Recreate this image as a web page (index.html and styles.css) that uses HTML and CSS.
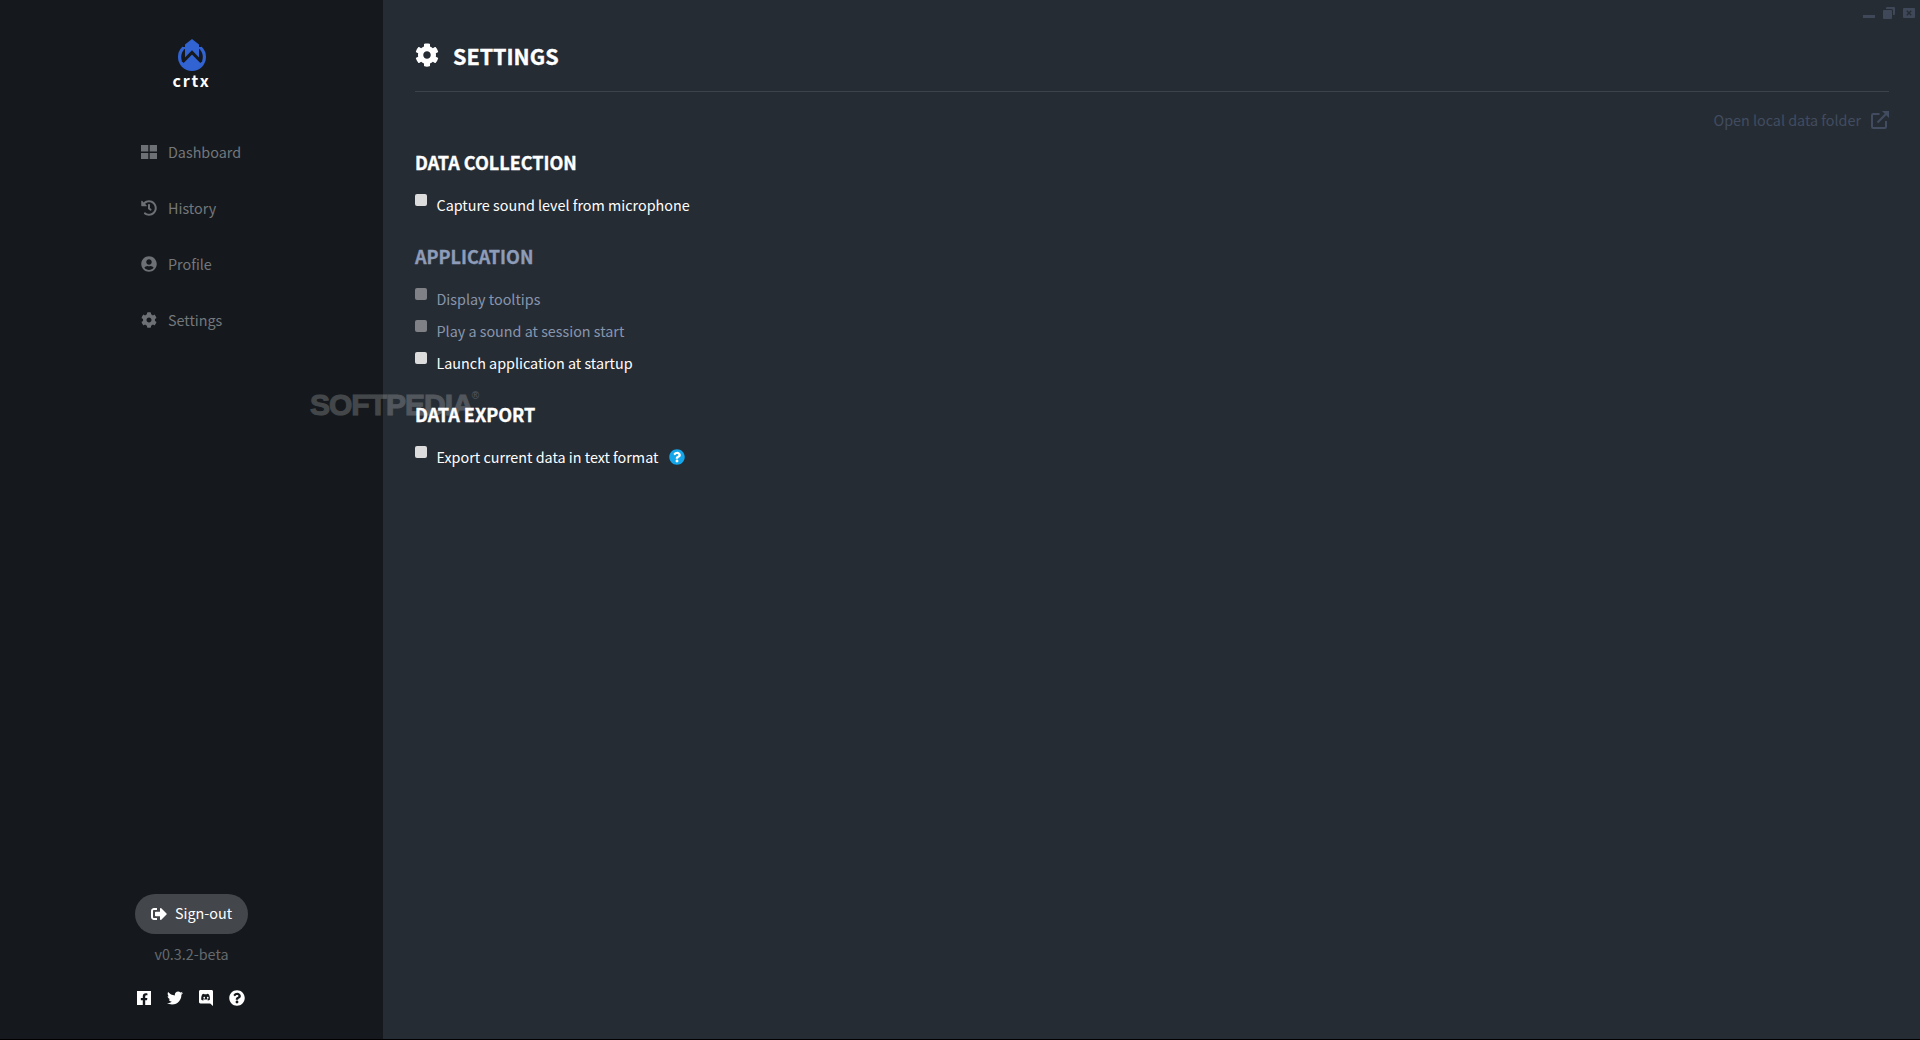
FILE: index.html
```html
<!DOCTYPE html>
<html lang="en">
<head>
<meta charset="utf-8">
<title>crtx - Settings</title>
<link rel="stylesheet" href="styles.css">
</head>
<body>
<div class="app">
  <aside class="sidebar">
    <div class="brand">
      <svg class="logo" viewBox="0 0 28 32" aria-hidden="true">
        <circle class="logo-blue" cx="14" cy="18" r="14"/>
        <circle class="logo-dark" cx="14" cy="18" r="10.800"/>
        <path class="logo-dark" d="M6 2H22L23.500 8H4.500z"/>
        <path class="logo-blue" d="M14 0L21 5.500V18H7V5.500z"/>
        <path class="logo-blue" d="M7 16H21V22L24.500 23A10.800 10.800 0 0 1 3.500 23L7 22z"/>
        <path class="logo-chevron" d="M4.600 23L14 13.500 23.400 23"/>
      </svg>
      <div class="brand-name">crtx</div>
    </div>
    <nav class="nav">
      <a class="nav-item">
        <svg class="nav-icon" viewBox="0 0 16 16"><path d="M0 1h7.300v6.500H0zM8.700 1H16v6.500H8.700zM0 8.900h7.300v6.100H0zM8.700 8.900H16v6.100H8.700z"/></svg>
        <span>Dashboard</span>
      </a>
      <a class="nav-item">
        <svg class="nav-icon" viewBox="0 0 512 512"><path d="M504 255.531c.253 136.64-111.18 248.372-247.82 248.468-59.015.042-113.223-20.53-155.822-54.911-11.077-8.94-11.905-25.541-1.839-35.607l11.267-11.267c8.609-8.609 22.353-9.551 31.891-1.984C173.062 425.135 212.781 440 256 440c101.705 0 184-82.311 184-184 0-101.705-82.311-184-184-184-48.814 0-93.149 18.969-126.068 49.932l50.754 50.754c10.08 10.08 2.941 27.314-11.313 27.314H24c-8.837 0-16-7.163-16-16V38.627c0-14.254 17.234-21.393 27.314-11.314l49.372 49.372C129.209 34.136 189.552 8 256 8c136.81 0 247.747 110.78 248 247.531zm-180.912 78.784l9.823-12.63c8.138-10.463 6.253-25.542-4.21-33.679L288 256.349V152c0-13.255-10.745-24-24-24h-16c-13.255 0-24 10.745-24 24v135.651l65.409 50.874c10.463 8.137 25.541 6.253 33.679-4.21z"/></svg>
        <span>History</span>
      </a>
      <a class="nav-item">
        <svg class="nav-icon" viewBox="0 0 496 512"><path d="M248 8C111 8 0 119 0 256s111 248 248 248 248-111 248-248S385 8 248 8zm0 96c48.6 0 88 39.4 88 88s-39.4 88-88 88-88-39.4-88-88 39.4-88 88-88zm0 344c-58.7 0-111.3-26.6-146.5-68.2 18.8-35.4 55.6-59.8 98.5-59.8 2.4 0 4.8.4 7.1 1.1 13 4.2 26.6 6.9 40.9 6.9 14.3 0 28-2.7 40.9-6.9 2.3-.7 4.7-1.1 7.1-1.1 42.9 0 79.7 24.4 98.5 59.8C359.3 421.4 306.7 448 248 448z"/></svg>
        <span>Profile</span>
      </a>
      <a class="nav-item">
        <svg class="nav-icon" viewBox="0 0 512 512"><path d="M487.4 315.7l-42.6-24.6c4.3-23.2 4.3-47 0-70.2l42.6-24.6c4.9-2.8 7.1-8.6 5.5-14-11.1-35.6-30-67.8-54.7-94.6-3.8-4.1-10-5.1-14.8-2.3L380.8 110c-17.9-15.4-38.5-27.3-60.8-35.1V25.8c0-5.6-3.9-10.5-9.4-11.7-36.7-8.2-74.3-7.8-109.2 0-5.5 1.2-9.4 6.1-9.4 11.7V75c-22.2 7.9-42.8 19.8-60.8 35.1L88.7 85.5c-4.9-2.8-11-1.9-14.8 2.3-24.7 26.7-43.6 58.9-54.7 94.6-1.7 5.4.6 11.2 5.5 14L67.3 221c-4.3 23.2-4.3 47 0 70.2l-42.6 24.6c-4.9 2.8-7.1 8.6-5.5 14 11.1 35.6 30 67.8 54.7 94.6 3.8 4.1 10 5.1 14.8 2.3l42.6-24.6c17.9 15.4 38.5 27.3 60.8 35.1v49.2c0 5.6 3.9 10.5 9.4 11.7 36.7 8.2 74.3 7.8 109.2 0 5.5-1.2 9.4-6.1 9.4-11.7v-49.2c22.2-7.9 42.8-19.8 60.8-35.1l42.6 24.6c4.9 2.8 11 1.9 14.8-2.3 24.7-26.7 43.6-58.9 54.7-94.6 1.5-5.5-.7-11.3-5.6-14.1zM256 336c-44.1 0-80-35.9-80-80s35.9-80 80-80 80 35.9 80 80-35.9 80-80 80z"/></svg>
        <span>Settings</span>
      </a>
    </nav>
    <div class="side-footer">
      <button class="signout">
        <svg class="signout-icon" viewBox="0 0 512 512"><path d="M497 273L329 441c-15 15-41 4.5-41-17v-96H152c-13.3 0-24-10.7-24-24v-96c0-13.3 10.7-24 24-24h136V88c0-21.4 25.9-32 41-17l168 168c9.3 9.4 9.3 24.6 0 34zM192 436v-40c0-6.6-5.4-12-12-12H96c-17.7 0-32-14.3-32-32V160c0-17.7 14.3-32 32-32h84c6.6 0 12-5.4 12-12V76c0-6.6-5.4-12-12-12H96c-53 0-96 43-96 96v192c0 53 43 96 96 96h84c6.6 0 12-5.4 12-12z"/></svg>
        <span class="signout-label">Sign-out</span>
      </button>
      <div class="version">v0.3.2-beta</div>
      <div class="social">
        <svg class="social-icon narrow" viewBox="0 0 448 512"><path d="M400 32H0v448h185.25V327.69h-63V256h63v-54.64c0-62.15 37-96.48 93.67-96.48 27.14 0 55.52 4.84 55.52 4.84v61h-31.27c-30.81 0-40.42 19.12-40.42 38.73V256h68.78l-11 71.69h-57.78V480H448V32z"/></svg>
        <svg class="social-icon" viewBox="0 0 512 512"><path d="M459.37 151.716c.325 4.548.325 9.097.325 13.645 0 138.72-105.583 298.558-298.558 298.558-59.452 0-114.68-17.219-161.137-47.106 8.447.974 16.568 1.299 25.34 1.299 49.055 0 94.213-16.568 130.274-44.832-46.132-.975-84.792-31.188-98.112-72.772 6.498.974 12.995 1.624 19.818 1.624 9.421 0 18.843-1.3 27.614-3.573-48.081-9.747-84.143-51.98-84.143-102.985v-1.299c13.969 7.797 30.214 12.67 47.431 13.319-28.264-18.843-46.781-51.005-46.781-87.391 0-19.492 5.197-37.36 14.294-52.954 51.655 63.675 129.3 105.258 216.365 109.807-1.624-7.797-2.599-15.918-2.599-24.04 0-57.828 46.782-104.934 104.934-104.934 30.213 0 57.502 12.67 76.67 33.137 23.715-4.548 46.456-13.32 66.599-25.34-7.798 24.366-24.366 44.833-46.132 57.827 21.117-2.273 41.584-8.122 60.426-16.243-14.292 20.791-32.161 39.308-52.628 54.253z"/></svg>
        <svg class="social-icon narrow" viewBox="0 0 16 16" preserveAspectRatio="none"><path fill-rule="evenodd" d="M1.600 0h12.800C15.300 0 16 .7 16 1.600V16l-3.200-2.600H1.600C.7 13.400 0 12.700 0 11.800V1.600C0 .7.700 0 1.600 0zM5.800 3.800c-1 .1-1.800.4-2.400.9-.7 1.500-1 3-.9 4.700.6.600 1.500 1 2.400 1.100l.6-.8c-.4-.1-.7-.3-1-.5l.3-.2c1.700.8 3.700.8 5.400 0l.3.2c-.3.2-.6.400-1 .5l.6.8c.9-.1 1.800-.5 2.400-1.100.1-1.700-.2-3.200-.9-4.700-.6-.5-1.400-.8-2.400-.9l-.3.5c-1-.1-2-.1-3 0zM6 6.800a1 1 0 1 1 0 2 1 1 0 0 1 0-2zm4 0a1 1 0 1 1 0 2 1 1 0 0 1 0-2z"/></svg>
        <svg class="social-icon" viewBox="0 0 512 512"><path d="M504 256c0 136.997-111.043 248-248 248S8 392.997 8 256C8 119.083 119.043 8 256 8s248 111.083 248 248zM262.655 90c-54.497 0-89.255 22.957-116.549 63.758-3.536 5.286-2.353 12.415 2.715 16.258l34.699 26.31c5.205 3.947 12.621 3.008 16.665-2.122 17.864-22.658 30.113-35.797 57.303-35.797 20.429 0 45.698 13.148 45.698 32.958 0 14.976-12.363 22.667-32.534 33.976C247.128 238.528 216 254.941 216 296v4c0 6.627 5.373 12 12 12h56c6.627 0 12-5.373 12-12v-1.333c0-28.462 83.186-29.647 83.186-106.667 0-58.002-60.165-102-116.531-102zM256 338c-25.365 0-46 20.635-46 46 0 25.364 20.635 46 46 46s46-20.636 46-46c0-25.365-20.635-46-46-46z"/></svg>
      </div>
    </div>
  </aside>
  <main class="content">
    <header class="page-head">
      <svg class="head-icon" viewBox="0 0 512 512"><path d="M487.4 315.7l-42.6-24.6c4.3-23.2 4.3-47 0-70.2l42.6-24.6c4.9-2.8 7.1-8.6 5.5-14-11.1-35.6-30-67.8-54.7-94.6-3.8-4.1-10-5.1-14.8-2.3L380.8 110c-17.9-15.4-38.5-27.3-60.8-35.1V25.8c0-5.6-3.9-10.5-9.4-11.7-36.7-8.2-74.3-7.8-109.2 0-5.5 1.2-9.4 6.1-9.4 11.7V75c-22.2 7.9-42.8 19.8-60.8 35.1L88.7 85.5c-4.9-2.8-11-1.9-14.8 2.3-24.7 26.7-43.6 58.9-54.7 94.6-1.7 5.4.6 11.2 5.5 14L67.3 221c-4.3 23.2-4.3 47 0 70.2l-42.6 24.6c-4.9 2.8-7.1 8.6-5.5 14 11.1 35.6 30 67.8 54.7 94.6 3.8 4.1 10 5.1 14.8 2.3l42.6-24.6c17.9 15.4 38.5 27.3 60.8 35.1v49.2c0 5.6 3.9 10.5 9.4 11.7 36.7 8.2 74.3 7.8 109.2 0 5.5-1.2 9.4-6.1 9.4-11.7v-49.2c22.2-7.9 42.8-19.8 60.8-35.1l42.6 24.6c4.9 2.8 11 1.9 14.8-2.3 24.7-26.7 43.6-58.9 54.7-94.6 1.5-5.5-.7-11.3-5.6-14.1zM256 336c-44.1 0-80-35.9-80-80s35.9-80 80-80 80 35.9 80 80-35.9 80-80 80z"/></svg>
      <h1 class="page-title">SETTINGS</h1>
    </header>
    <div class="folder-row">
      <span>Open local data folder</span>
      <svg class="folder-icon" viewBox="0 0 18 18"><path d="M8.500 3H2.200A1.200 1.200 0 0 0 1 4.200v11.600A1.200 1.200 0 0 0 2.200 17h11.600a1.200 1.200 0 0 0 1.200-1.200V10" fill="none" stroke-width="2"/><path d="M6.500 11.500 15.500 2.500" fill="none" stroke-width="2.200"/><path class="folder-arrow" d="M11 0h7v7z"/></svg>
    </div>
    <section>
      <h2 class="group-title">DATA COLLECTION</h2>
      <label class="option"><span class="check"></span><span>Capture sound level from microphone</span></label>
    </section>
    <section class="muted">
      <h2 class="group-title">APPLICATION</h2>
      <label class="option"><span class="check"></span><span>Display tooltips</span></label>
      <label class="option"><span class="check"></span><span>Play a sound at session start</span></label>
      <label class="option enabled"><span class="check"></span><span>Launch application at startup</span></label>
    </section>
    <section>
      <h2 class="group-title">DATA EXPORT</h2>
      <label class="option"><span class="check"></span><span>Export current data in text format</span>
        <svg class="help" viewBox="0 0 512 512"><circle cx="256" cy="256" r="200" fill="#fff"/><path d="M504 256c0 136.997-111.043 248-248 248S8 392.997 8 256C8 119.083 119.043 8 256 8s248 111.083 248 248zM262.655 90c-54.497 0-89.255 22.957-116.549 63.758-3.536 5.286-2.353 12.415 2.715 16.258l34.699 26.31c5.205 3.947 12.621 3.008 16.665-2.122 17.864-22.658 30.113-35.797 57.303-35.797 20.429 0 45.698 13.148 45.698 32.958 0 14.976-12.363 22.667-32.534 33.976C247.128 238.528 216 254.941 216 296v4c0 6.627 5.373 12 12 12h56c6.627 0 12-5.373 12-12v-1.333c0-28.462 83.186-29.647 83.186-106.667 0-58.002-60.165-102-116.531-102zM256 338c-25.365 0-46 20.635-46 46 0 25.364 20.635 46 46 46s46-20.636 46-46c0-25.365-20.635-46-46-46z"/></svg>
      </label>
    </section>
  </main>
  <div class="window-controls">
    <span class="win-min"></span>
    <svg class="win-icon" viewBox="0 0 12 12"><path d="M4 0h7a1 1 0 0 1 1 1v6a1 1 0 0 1-1 1h-1V3.500A1.500 1.500 0 0 0 8.500 2H3V1a1 1 0 0 1 1-1zM1 3h7a1 1 0 0 1 1 1v7a1 1 0 0 1-1 1H1a1 1 0 0 1-1-1V4a1 1 0 0 1 1-1z"/></svg>
    <svg class="win-icon" viewBox="0 0 12 12"><path fill-rule="evenodd" d="M1 1h10a1 1 0 0 1 1 1v8a1 1 0 0 1-1 1H1a1 1 0 0 1-1-1V2a1 1 0 0 1 1-1zM4.300 3.300 3.300 4.300 5 6 3.300 7.700l1 1L6 7l1.700 1.700 1-1L7 6l1.700-1.700-1-1L6 5z"/></svg>
  </div>
  <div class="watermark">SOFTPEDIA<span class="watermark-mark">®</span></div>
</div>
</body>
</html>
```

FILE: styles.css
```css
* { box-sizing: border-box; }
html, body { margin: 0; height: 100%; }
body {
  font-family: "Noto Sans CJK SC", "Noto Sans", sans-serif;
  font-size: 14.35px;
  background: #000;
  overflow: hidden;
}
.app {
  position: relative;
  display: flex;
  height: 1039px;
}
.sidebar {
  width: 383px;
  flex: none;
  display: flex;
  flex-direction: column;
  padding-top: 39px;
  background: #15191d;
}
.brand {
  display: flex;
  flex-direction: column;
  align-items: center;
}
.logo { width: 28px; height: 32px; display: block; }
.logo-blue { fill: #3163d2; }
.logo-dark { fill: #15191d; }
.logo-chevron { fill: none; stroke: #15191d; stroke-width: 3; }
.brand-name {
  height: 20px;
  margin-top: -1px;
  line-height: 20px;
  font-size: 16px;
  font-weight: 700;
  letter-spacing: 1.8px;
  color: #fff;
}
.nav {
  margin-top: 34px;
  display: flex;
  flex-direction: column;
  padding-left: 141px;
}
.nav-item {
  height: 56px;
  display: flex;
  align-items: center;
  gap: 11px;
  line-height: 24px;
  padding-bottom: 1px;
  color: #74777b;
}
.nav-icon { width: 16px; height: 16px; fill: #6d7074; flex: none; }
.side-footer {
  margin-top: auto;
  display: flex;
  flex-direction: column;
  align-items: center;
  padding-bottom: 33px;
}
.signout {
  width: 113px;
  height: 40px;
  border: 0;
  border-radius: 20px;
  padding: 0;
  background: #43464b;
  color: #fff;
  font: inherit;
  display: flex;
  align-items: center;
  justify-content: center;
  gap: 8px;
}
.signout-icon { width: 16px; height: 16px; fill: #fff; }
.signout-label { line-height: 22px; margin-top: -2px; }
.version {
  margin-top: 11px;
  height: 20px;
  line-height: 18px;
  color: #66696d;
}
.social {
  margin-top: 25px;
  display: flex;
  gap: 16px;
  margin-left: -1px;
}
.social-icon { width: 16px; height: 16px; fill: #fff; }
.social-icon.narrow { width: 14px; }
.content {
  flex: 1;
  min-width: 0;
  padding: 0 31px 0 32px;
  background: #262c34;
  color: #fff;
}
.page-head {
  height: 92px;
  padding-top: 20px;
  display: flex;
  align-items: center;
  gap: 14px;
  border-bottom: 1px solid #3d434c;
}
.head-icon { width: 24px; height: 24px; fill: #fff; margin-bottom: 1px; flex: none; }
.page-title {
  margin: 0;
  font-size: 21.5px;
  font-weight: 700;
  line-height: 30px;
  -webkit-text-stroke: 0.4px #fff;
  color: #fff;
}
.folder-row {
  margin-top: 16px;
  height: 24px;
  display: flex;
  justify-content: flex-end;
  align-items: center;
  gap: 10px;
  line-height: 24px;
  color: #414c60;
}
.folder-icon { width: 18px; height: 18px; stroke: #414c60; }
.folder-arrow { fill: #414c60; stroke: none; }
section { margin-top: 23px; }
.folder-row + section { margin-top: 19px; }
.group-title {
  margin: 0 0 15px;
  font-size: 18px;
  font-weight: 700;
  line-height: 22px;
  padding: 0 0 2px;
  -webkit-text-stroke: 0.35px currentColor;
  color: #fff;
}
.option {
  height: 32px;
  display: flex;
  align-items: center;
  gap: 9.5px;
  line-height: 22px;
  padding-bottom: 1.5px;
  color: #fff;
}
.check {
  width: 12px;
  height: 12px;
  flex: none;
  align-self: flex-start;
  margin-top: 4px;
  border-radius: 2px;
  background: #dcdcdc;
}
.muted .group-title { color: #8d9cb8; }
.muted .option { color: #8896ad; }
.muted .check { background: #7f8186; }
.muted .option.enabled { color: #fff; }
.muted .option.enabled .check { background: #dcdcdc; }
.help { width: 16px; height: 16px; fill: #13a6ea; margin-left: 1.5px; }
.window-controls {
  position: absolute;
  top: 7px;
  right: 5px;
  display: flex;
  align-items: flex-start;
  gap: 8px;
}
.win-min {
  width: 12px;
  height: 3px;
  margin-top: 8px;
  background: #3f4858;
}
.win-icon { width: 12px; height: 12px; fill: #3f4858; }
.watermark {
  position: absolute;
  left: 310px;
  top: 387px;
  font-family: "Liberation Sans", sans-serif;
  font-size: 30px;
  line-height: 36px;
  font-weight: 700;
  letter-spacing: -1px;
  -webkit-text-stroke: 1px #fff;
  color: #fff;
  opacity: 0.2;
  pointer-events: none;
}
.watermark-mark {
  font-size: 10px;
  line-height: 0;
  letter-spacing: 0;
  -webkit-text-stroke: 0;
  margin-left: -1px;
  vertical-align: 16px;
  font-weight: 400;
}
```
